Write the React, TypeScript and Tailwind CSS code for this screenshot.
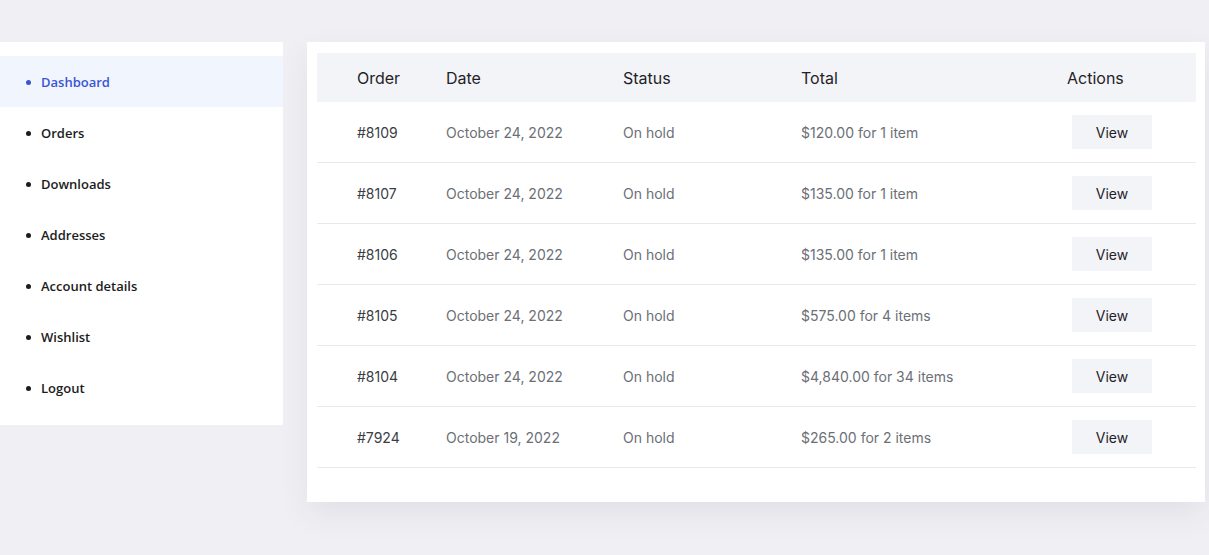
const navItems = [
  "Dashboard",
  "Orders",
  "Downloads",
  "Addresses",
  "Account details",
  "Wishlist",
  "Logout",
];

const orders = [
  { id: "#8109", date: "October 24, 2022", status: "On hold", total: "$120.00", items: "1 item" },
  { id: "#8107", date: "October 24, 2022", status: "On hold", total: "$135.00", items: "1 item" },
  { id: "#8106", date: "October 24, 2022", status: "On hold", total: "$135.00", items: "1 item" },
  { id: "#8105", date: "October 24, 2022", status: "On hold", total: "$575.00", items: "4 items" },
  { id: "#8104", date: "October 24, 2022", status: "On hold", total: "$4,840.00", items: "34 items" },
  { id: "#7924", date: "October 19, 2022", status: "On hold", total: "$265.00", items: "2 items" },
];

function Sidebar() {
  return (
    <nav className="w-[283px] shrink-0 self-start bg-white pt-[14px] pb-[12px] font-['Open_Sans',sans-serif]">
      {navItems.map((item, i) => {
        const active = i === 0;
        return (
          <a
            key={item}
            href="#"
            className={
              active
                ? "flex h-[51px] items-center gap-[10px] bg-[#f1f5fe] pt-[2px] pl-[26px] text-[13px] font-semibold text-[#3a55d4]"
                : "flex h-[51px] items-center gap-[10px] pt-[2px] pl-[26px] text-[13px] font-semibold text-[#1c1c1c]"
            }
          >
            <span
              className={
                active
                  ? "h-[5px] w-[5px] rounded-full bg-[#3a55d4]"
                  : "h-[5px] w-[5px] rounded-full bg-[#1c1c1c]"
              }
            />
            {item}
          </a>
        );
      })}
    </nav>
  );
}

function OrdersTable() {
  return (
    <section className="w-[898px] shrink-0 self-start bg-white pt-[11px] pr-[9px] pb-[34px] pl-[10px] font-['Inter',sans-serif] shadow-[0_12px_30px_rgba(20,20,50,0.07)]">
      {/* Header */}
      <div className="flex h-[49px] items-center bg-[#f3f4f8] pl-[40px] text-[16px] text-[#1f2329]">
        <div className="w-[89px]">Order</div>
        <div className="w-[177px]">Date</div>
        <div className="w-[178px]">Status</div>
        <div className="w-[266px]">Total</div>
        <div>Actions</div>
      </div>

      {/* Rows */}
      {orders.map((o) => (
        <div
          key={o.id}
          className="flex h-[61px] items-center border-b border-[#e8e9ec] pl-[40px] text-[14px] text-[#6b6f76]"
        >
          <div className="w-[89px] text-[#3a3d42]">{o.id}</div>
          <div className="w-[177px]">{o.date}</div>
          <div className="w-[178px]">{o.status}</div>
          <div className="w-[266px]">
            {o.total} for {o.items}
          </div>
          <div>
            <button className="ml-[5px] h-[34px] w-[80px] bg-[#f3f4f7] text-[14px] text-[#1f2329]">
              View
            </button>
          </div>
        </div>
      ))}
    </section>
  );
}

export default function App() {
  return (
    <div className="min-h-[555px] bg-[#f0f0f4] pt-[42px]">
      <div className="flex gap-[24px]">
        <Sidebar />
        <OrdersTable />
      </div>
    </div>
  );
}
